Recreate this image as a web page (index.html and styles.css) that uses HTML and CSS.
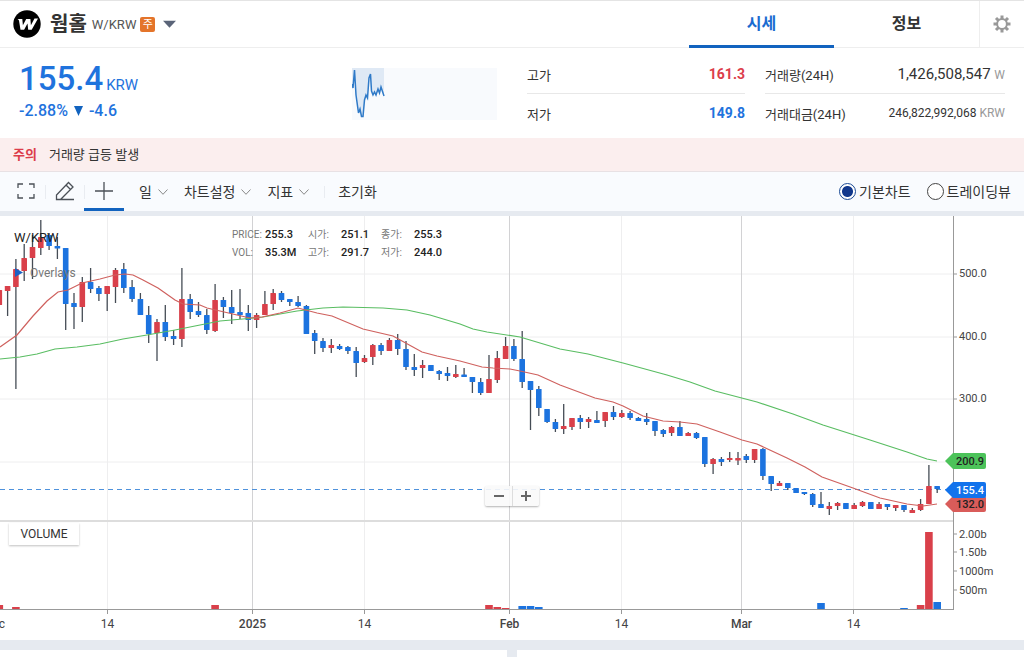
FILE: index.html
```html
<!DOCTYPE html>
<html lang="ko">
<head>
<meta charset="utf-8">
<meta name="viewport" content="width=device-width, initial-scale=1">
<title>웜홀 W/KRW</title>
<link rel="stylesheet" href="styles.css">
</head>
<body>
<header class="topbar">
  <svg class="coin" viewBox="0 0 28 28" aria-hidden="true">
    <circle cx="14" cy="14" r="13.7"/>
    <path d="M4.5 9h4.8l.6 6.3L13.2 9h4.2l.5 6.3L21.5 8.6H25L18.7 19.7h-3.5l-.7-6.2-3.4 6.2H7.5L6.1 11.3C6 10.3 5.600 9.600 4.500 9z"/>
  </svg>
  <h1 class="coin-name">웜홀</h1>
  <span class="pair">W/KRW</span>
  <span class="badge">주</span>
  <button class="market-toggle" type="button" aria-label="마켓 선택"><svg viewBox="0 0 14 8"><path d="M0 0.500h14L7 8z"/></svg></button>
  <nav class="tabs">
    <a class="tab tab-on" href="#price">시세</a>
    <a class="tab" href="#info">정보</a>
  </nav>
  <button class="settings" type="button" aria-label="설정">
    <svg viewBox="0 0 18 18"><g class="teeth"><path d="M9 .5v17M.5 9h17M3 3l12 12M15 3l-12 12"/></g><circle class="ring" cx="9" cy="9" r="4.900"/></svg>
  </button>
</header>

<section class="summary" id="price">
  <div class="price">
    <p class="price-now">155.4<small>KRW</small></p>
    <p class="price-change">-2.88% <svg viewBox="0 0 9 10" aria-hidden="true"><path d="M0 0h9L4.500 10z"/></svg> -4.6</p>
  </div>
  <svg class="spark" viewBox="0 0 145 52" aria-hidden="true">
    <path class="spark-area" d="M0 0H32V28L29 19 27.500 25 26 21 24 27 22.500 24 21 27 19.500 23 18.500 6 17 10 15 30 14 27 12.500 32 11 48H9.500L8 41 6.500 45 4 27 2.500 2 1 20 0 16Z"/>
    <path class="spark-line" d="M0 16 1 20 2.500 2 4 27 6.500 45 8 41 9.500 48.500H11L12.500 32 14 27 15.500 30 17 10 18.500 6 19.500 23 21 27 22.500 24 24 27 26 21 27.500 25 29 19 32 28"/>
  </svg>
  <dl class="stats">
    <div class="stat lined"><dt>고가</dt><dd class="up">161.3</dd></div>
    <div class="stat lined"><dt>거래량(24H)</dt><dd>1,426,508,547 <small>W</small></dd></div>
    <div class="stat"><dt>저가</dt><dd class="down">149.8</dd></div>
    <div class="stat"><dt>거래대금(24H)</dt><dd class="small-number">246,822,992,068 <small>KRW</small></dd></div>
  </dl>
</section>

<p class="notice"><strong>주의</strong>거래량 급등 발생</p>

<div class="toolbar">
  <button class="tool" type="button" aria-label="전체화면"><svg viewBox="0 0 20 20"><path d="M2 7V3h5M13 3h5v4M18 13v4h-5M7 17H2v-4"/></svg></button>
  <button class="tool" type="button" aria-label="그리기"><svg viewBox="0 0 20 20"><path d="M1.500 18.500v-4.500L13.500 1.500 18 6 5.500 18.500zM1.500 18.500H19M11 4l4.500 4.500"/></svg></button>
  <button class="tool tool-on" type="button" aria-label="십자선"><svg viewBox="0 0 20 20"><path d="M10 1v18M1 10h18"/></svg></button>
  <div class="menus">
    <button class="menu" type="button">일<svg viewBox="0 0 10 6"><path d="M.5.5 5 5.300 9.500.5"/></svg></button>
    <button class="menu" type="button">차트설정<svg viewBox="0 0 10 6"><path d="M.5.5 5 5.300 9.500.5"/></svg></button>
    <button class="menu" type="button">지표<svg viewBox="0 0 10 6"><path d="M.5.5 5 5.300 9.500.5"/></svg></button>
  </div>
  <button class="menu reset" type="button">초기화</button>
  <div class="chart-kind">
    <label><input type="radio" name="kind" checked>기본차트</label>
    <label><input type="radio" name="kind">트레이딩뷰</label>
  </div>
</div>

<main class="chart">
  <svg class="plot" id="plot" viewBox="0 216 1024 424" role="img" aria-label="W/KRW 일봉 차트"></svg>
  <table class="readout">
    <tr><th>PRICE:</th><td>255.3</td><th>시가:</th><td>251.1</td><th>종가:</th><td>255.3</td></tr>
    <tr><th>VOL:</th><td>35.3M</td><th>고가:</th><td>291.7</td><th>저가:</th><td>244.0</td></tr>
  </table>
  <div class="zoomer">
    <button type="button" aria-label="축소"><svg viewBox="0 0 12 12"><path d="M1 6h10"/></svg></button>
    <button type="button" aria-label="확대"><svg viewBox="0 0 12 12"><path d="M1 6h10M6 1v10"/></svg></button>
  </div>
  <button class="volume" type="button">VOLUME</button>
</main>
<footer class="panels"><div></div><div></div></footer>
<script src="chart.js"></script>
</body>
</html>
```
FILE: styles.css
```css
* { box-sizing: border-box; }
body {
  margin: 0;
  min-height: 100vh;
  display: flex;
  flex-direction: column;
  background: #fff;
  color: #333;
  font-family: Roboto, "Noto Sans CJK KR", sans-serif;
  font-size: 14px;
}
h1, p, dl, dd { margin: 0; }
button {
  padding: 0;
  border: 0;
  background: none;
  color: inherit;
  font: inherit;
}
svg { display: block; }

.topbar {
  display: flex;
  align-items: center;
  height: 48px;
  padding-left: 13px;
  border-top: 1px solid #e4e4e4;
  border-bottom: 1px solid #eee;
}
.coin { width: 28px; height: 28px; }
.coin path { fill: #fff; }
.coin-name { margin-left: 9px; font-size: 20px; line-height: 28px; font-weight: 700; }
.pair { margin-left: 5px; font-size: 13px; color: #555; }
.badge {
  display: grid;
  place-items: center;
  width: 15px;
  height: 15px;
  margin-left: 4px;
  border-radius: 2px;
  background: #e4742a;
  color: #fff;
  font-size: 11px;
  line-height: 15px;
}
.market-toggle { margin-left: 8px; }
.market-toggle svg { width: 13px; height: 8px; fill: #5a6478; }
.tabs { display: flex; align-self: stretch; margin-left: auto; }
.tab {
  width: 145px;
  height: 47px;
  border-bottom: 3px solid transparent;
  color: #333;
  font-size: 16px;
  font-weight: 700;
  line-height: 46px;
  text-align: center;
  text-decoration: none;
}
.tab-on { border-color: #1263bf; color: #1a6bd0; }
.settings {
  display: grid;
  place-items: center;
  align-self: stretch;
  width: 45px;
  border-left: 1px solid #eee;
}
.settings svg { width: 18px; height: 18px; fill: none; stroke: #999; }
.teeth { stroke-width: 3; }
.ring { fill: #fff; stroke-width: 2; }

.summary {
  display: flex;
  align-items: center;
  height: 90px;
  padding: 1px 19px 0;
}
.price { flex: 1; padding-bottom: 9px; color: #1f73dd; font-weight: 500; }
.price-now { font-size: 33px; line-height: 43px; }
.price-now small { margin-left: 3px; font-size: 15px; font-weight: 400; line-height: 1; }
.price-change { font-size: 16px; line-height: 21px; }
.price-change svg { display: inline-block; width: 9px; height: 10px; margin: 0 2px; fill: #1263bf; }
.spark { width: 145px; height: 52px; margin-right: 30px; background: #f8fafd; }
.spark-area { fill: #dfe9f5; }
.spark-line { fill: none; stroke: #2f7ac8; stroke-width: 1.500; }
.stats { display: grid; grid-template-columns: 218px 240px; column-gap: 20px; }
.stat { display: flex; justify-content: space-between; align-items: center; height: 38px; }
.lined { height: 39px; border-bottom: 1px solid #e8e8e8; }
.stat dt { font-size: 13px; }
.stat dd { font-size: 15px; }
.stat small { color: #999; font-size: 12px; }
.stat .up { color: #dc3d4b; font-size: 14px; font-weight: 700; }
.stat .down { color: #1f73dd; font-size: 14px; font-weight: 700; }
.stat .small-number { font-size: 12px; }

.notice {
  height: 34px;
  padding: 0 13px;
  border-bottom: 1px solid #e8e1e4;
  background: #fbeeee;
  font-size: 13px;
  line-height: 33px;
}
.notice strong { margin-right: 12px; color: #dc3d4b; font-size: 13px; }

.toolbar {
  display: flex;
  align-items: center;
  height: 44px;
  padding: 0 13px 0 6px;
  border-bottom: 5px solid #e6eaf0;
  background: #f9fbfe;
}
.tool {
  display: grid;
  place-items: center;
  width: 39px;
  height: 39px;
  padding-top: 2px;
  border-bottom: 3px solid transparent;
}
.tool + .tool { background: linear-gradient(#e9ecf1, #e9ecf1) 0 60% / 1px 14px no-repeat; }
.tool-on { width: 40px; border-color: #1263bf; }
.tool svg { width: 20px; height: 20px; fill: none; stroke: #4b5057; stroke-width: 1.300; }
.menus { display: flex; gap: 16px; margin-left: 15px; }
.menu { display: flex; align-items: center; gap: 6px; line-height: 20px; }
.menu svg { width: 10px; height: 6px; fill: none; stroke: #888; }
.reset { margin-left: 15px; padding-left: 14px; background: linear-gradient(#e9ecf1, #e9ecf1) 0 50% / 1px 12px no-repeat; }
.chart-kind { display: flex; gap: 16px; margin-left: auto; }
.chart-kind label { display: flex; align-items: center; gap: 3px; line-height: 20px; }
.chart-kind input {
  appearance: none;
  width: 17px;
  height: 17px;
  margin: 0;
  border: 1px solid #444;
  border-radius: 50%;
  background: #fff;
}
.chart-kind input:checked {
  border-color: #1b4a95;
  background: radial-gradient(circle, #12388c 5px, #fff 6px);
}

.chart { position: relative; }
.plot { width: 100%; height: auto; }
.grid { stroke: #eeeeef; }
.grid-month { stroke: #d2d2d4; }
.axis { stroke: #999; }
.divider { stroke: #ddd; stroke-width: 2; }
.tick { fill: #444; font-size: 11px; }
.date { fill: #444; font-size: 12px; text-anchor: middle; }
.date-month { font-weight: 500; }
.wick { stroke: #454c55; stroke-width: 1.300; }
.rise { fill: #d9404a; }
.fall { fill: #1c73df; }
.average { fill: none; stroke-width: 1.200; }
.average-long { stroke: #59bd62; }
.average-short { stroke: #cf615e; }
.last-price { stroke: #4f92dc; stroke-dasharray: 5 4; }
.tag { font-size: 11px; font-weight: 500; }
.tag-long { fill: #4cc35a; }
.tag-short { fill: #d95c5a; }
.tag-last { fill: #1273ec; }
.tag-dark { fill: #222; }
.tag-light { fill: #fff; }
.plot-title { fill: #222; font-size: 13px; }
.plot-note { fill: #777; font-size: 12px; }
.plot-arrow { fill: #1b61c4; }

.readout {
  position: absolute;
  top: 10px;
  left: 232px;
  border-collapse: collapse;
  font-size: 11px;
  line-height: 18px;
}
.readout th, .readout td { height: 18px; padding: 0; text-align: left; line-height: 18px; }
.readout th { width: 33px; color: #777; font-size: 10px; font-weight: 400; }
.readout td { width: 40px; color: #222; font-weight: 500; }
.readout td:nth-child(2) { width: 43px; }
.zoomer {
  position: absolute;
  top: 270px;
  left: 50%;
  display: flex;
  margin-left: -27px;
  border-radius: 2px;
  background: rgba(250, 250, 250, .9);
  box-shadow: 0 1px 2px rgba(0, 0, 0, .3);
}
.zoomer button { display: grid; place-items: center; width: 27px; height: 20px; }
.zoomer button + button { border-left: 1px solid #ddd; }
.zoomer svg { width: 12px; height: 12px; fill: none; stroke: #666; stroke-width: 2; }
.volume {
  position: absolute;
  top: 307px;
  left: 9px;
  width: 70px;
  height: 22px;
  background: #fff;
  box-shadow: 0 1px 2px rgba(0, 0, 0, .25);
  font-size: 12px;
}
.panels {
  display: grid;
  flex: 1;
  grid-template-columns: 507px 1fr;
  gap: 10px;
  padding-top: 10px;
  background: #e6eaf0;
}
.panels div { background: #fff; }
```
FILE: chart.js
```javascript
// Each candle: rise (1) or fall (0), body top, body bottom, wick top, wick bottom.
const candles = [
  [1,290,305,290,305],[1,286,291,286,316],[1,269,287,259,389],[1,258,271,244,281],[1,247,258,235,279],
  [1,237,248,220,255],[0,235,246,233,250],[0,246,248.5,237,259],[0,248,304,248,330],[0,303,307,293,329],
  [1,282,307,277,322],[0,282,289,268,293],[0,288,294,286,301],[1,286,294,286,311],[1,270,287,268,303],
  [0,269,288,263,293],[0,287,299,280,302],[0,299,315,293,315],[0,315,334,306,343],[1,322,333,319,361],
  [0,322,337,305,341],[0,336,339,330,345],[1,299,339,268,347],[0,299,312,294,319],[0,311,315,302,317],
  [0,315,330,309,334],[1,300,331,284,332],[0,300,307,297,318],[0,307,313,290,324],[0,312,315,289,319],
  [0,313,320,305,331],[1,315,320,313,328],[1,304,315,291,315],[1,293,304,289,310],[0,293,300,291,302],
  [0,299,302,299,306],[0,302,306,296,307],[0,306,334,305,334],[0,333,341,330,354],[0,341,348,338,352],
  [1,345,348,339,353],[0,346,349,344,350],[0,347,351,346,354],[0,351,363,347,377],[1,358,362,355,363],
  [1,345,357,344,365],[0,345,351,343,355],[1,340,351,338,351],[0,340,349,334,355],[0,349,367,341,370],
  [0,367,370,354,376],[1,365,368,360,378],[0,365,371,365,371],[0,371,374,370,380],[0,373,376,367,381],
  [1,374,377,365,378],[0,374.5,377,368,377],[0,377,382,377,393],[0,382,393,378,395],[1,379,393,355,393],
  [1,358,380,351,383],[1,346,359,337,359],[0,346,359,339,361],[0,359,382,331,388],[0,381,390,381,430],
  [0,389,408,386,416],[0,409,422,409,423],[0,422,429,419,432],[1,426,429,404,434],[1,418,427,418,430],
  [0,418,422,415,429],[1,419,422,417,428],[0,420,423,411,423],[1,412,421,412,427],[0,412,417,406,420],
  [1,413,417,410,418],[0,413,418,411,420],[0,418,421,417,421],[0,419,422,413,425],[0,421,431,421,436],
  [0,430,434,429,437],[1,427,433,426,436],[0,427,436,421,436],[1,433,436,432,436],[0,433,438,432,439],
  [0,437,464,437,467],[1,459,464,458,474],[0,459,462,457,466],[1,458,460,452,462],[1,458,460.5,452,465],
  [0,456,460,454,463],[1,449,460,449,463],[0,449,476,448,480],[0,476,484,476,491],[1,483,486,481,486],
  [0,483,488,483,490],[0,488,493,488,493],[0,492,494,492,495],[0,494,505,493,507],[0,504,508,492,508],
  [1,506,509,502,515],[1,503,506,502,510],[0,503,509,503,509],[1,505,509,503,509],[1,502,506,501,507],
  [0,502,509,502,509],[1,504,509,502,509],[0,504,507,504,510],[1,505,508,505,511],[0,505,510,505,512],
  [1,510,513,508,513],[1,504,510,499,511],[1,486,504,465,504],[0,486,489,486,493]
];
const averages = {
  long: "0,359 20,357 37,354 55,349 77,347 100,344 123,339 147,335 175,330 200,325 220,321 243,319 263,317 297,311 323,308 343,307 383,308 407,310 430,315 460,324 473,329 487,332 520,337 560,349 588,354 623,363 667,375 690,382 715,391 757,402 793,414 823,425 870,440 907,452 927,459 937,461",
  short: "0,347 17,335 33,316 47,301 58,292 68,290 82,283 100,279 115,275 125,274 133,275 143,280 158,288 175,300 183,304 200,305 207,308 220,311 237,315 250,318 262,317 280,313 298,308 317,313 332,316 363,329 393,336 422,352 437,356 460,361 482,367 493,368 510,369 520,371 538,375 560,385 595,398 613,402 623,406 643,416 663,421 680,422 697,424 720,432 742,440 757,444 787,458 805,467 822,477 853,488 880,498 907,504 923,506 937,504"
};
const volumes = [[-1,4,1],[1,2,1],[25,4,1],[58,4,1],[59,2,1],[60,1,1],[62,3,0],[63,3,0],[64,2,0],[98,6,0],[108,1,0],[110,4,1],[111,77,1],[112,7,0]];

const parts = [];
const add = (s) => parts.push(s);
const line = (cls, x1, y1, x2, y2) => add(`<line class="${cls}" x1="${x1}" y1="${y1}" x2="${x2}" y2="${y2}"/>`);
const text = (cls, x, y, s) => add(`<text class="${cls}" x="${x}" y="${y}">${s}</text>`);
const center = (i) => 7.6 + 8.3 * i;

[[274, "500.0"], [337, "400.0"], [399, "300.0"], [462, ""]].forEach(([y, label]) => {
  line("grid", 0, y, 953, y);
  if (label) { line("axis", 953, y, 957, y); text("tick", 959, y + 3, label); }
});
[[107.5, "14"], [252.5, "2025", 1], [364.5, "14"], [509.5, "Feb", 1], [621.5, "14"], [741.5, "Mar", 1], [853.5, "14"]].forEach(([x, label, month]) => {
  line(month ? "grid-month" : "grid", x, 216, x, 609);
  line("axis", x, 609, x, 614);
  text(month ? "date date-month" : "date", x, 628, label);
});
text("date", 2, 628, "c");
line("divider", 0, 521, 953, 521);
line("axis", 953.5, 216, 953.5, 609);
line("last-price", 0, 489.5, 953, 489.5);

candles.forEach(([rise, top, bottom, high, low], n) => {
  const x = center(n - 1);
  line("wick", x, high, x, low);
  add(`<rect class="${rise ? "rise" : "fall"}" x="${x - 2.8}" y="${top}" width="5.6" height="${bottom - top}" rx=".6"/>`);
});
add(`<polyline class="average average-long" points="${averages.long}"/>`);
add(`<polyline class="average average-short" points="${averages.short}"/>`);

volumes.forEach(([i, h, rise]) => {
  add(`<rect class="${rise ? "rise" : "fall"}" x="${center(i) - 3.8}" y="${609 - h}" width="7.6" height="${h}"/>`);
});
line("axis", 0, 609.5, 954, 609.5);
[[534, "2.00b"], [552, "1.50b"], [571, "1000m"], [590, "500m"]].forEach(([y, label]) => {
  line("axis", 953, y, 957, y);
  text("tick", 959, y + 4, label);
});

const tag = (kind, tone, y, label) => {
  add(`<path class="tag-${kind}" d="M945 ${y}l8-8h31q2 0 2 2v12q0 2-2 2h-31z"/>`);
  text(`tag tag-${tone}`, 956, y + 4, label);
};
tag("long", "dark", 461, "200.9");
tag("short", "dark", 504, "132.0");
tag("last", "light", 490, "155.4");

text("plot-title", 14, 242, "W/KRW");
add('<path class="plot-arrow" d="M15 268l8 4.500-8 4.500z"/>');
text("plot-note", 30, 277, "Overlays");
document.getElementById("plot").innerHTML = parts.join("");
```
